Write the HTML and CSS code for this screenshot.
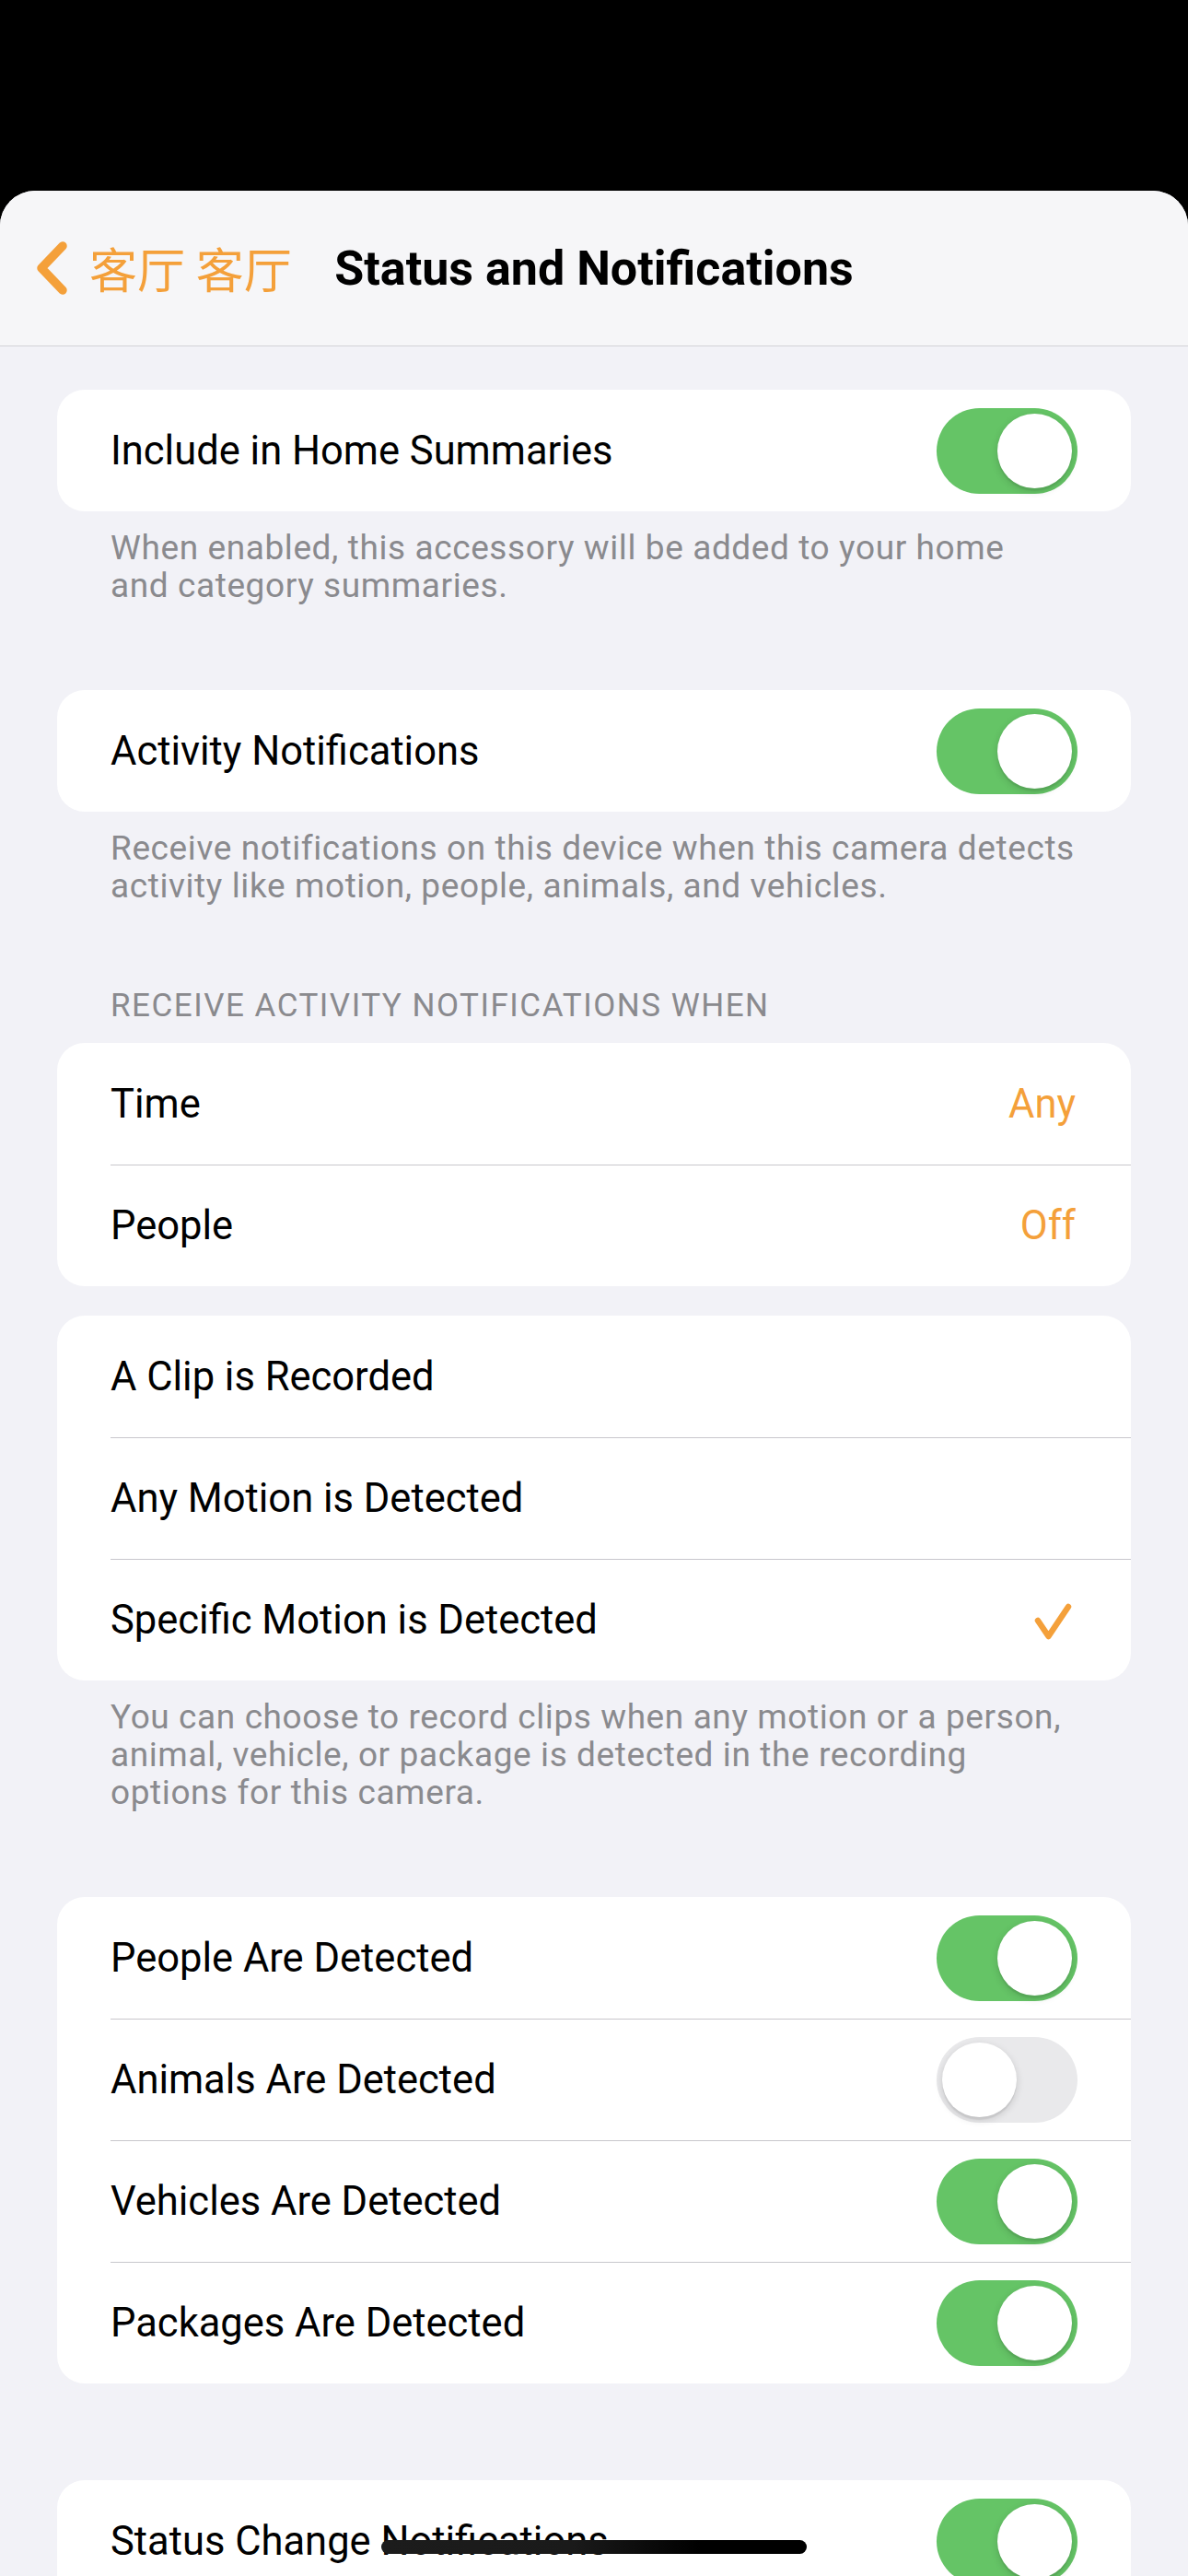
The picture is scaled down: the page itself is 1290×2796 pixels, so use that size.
FILE: index.html
```html
<!DOCTYPE html>
<html lang="en">
<head>
<meta charset="utf-8">
<title>Status and Notifications</title>
<link rel="stylesheet" href="styles.css">
</head>
<body>
<div class="sheet">
  <header class="nav">
    <div class="nav-row">
      <a class="back">
        <svg class="chev" width="34" height="58" viewBox="0 0 34 58"><path d="M29 5 L6 29 L29 53" fill="none" stroke="#f4a03a" stroke-width="9.5" stroke-linecap="round" stroke-linejoin="round"/></svg>
        <span class="back-label">客厅 客厅</span>
      </a>
      <h1 class="title">Status and Notifications</h1>
      <span class="nav-spacer"></span>
    </div>
  </header>

  <main class="content">
    <section class="group g-first">
      <div class="card">
        <div class="row"><div class="row-inner"><span class="label">Include in Home Summaries</span><span class="switch on"><span class="knob"></span></span></div></div>
      </div>
      <p class="footer">When enabled, this accessory will be added to your home<br>and category summaries.</p>
    </section>

    <section class="group g-after-footer">
      <div class="card">
        <div class="row"><div class="row-inner"><span class="label">Activity Notifications</span><span class="switch on"><span class="knob"></span></span></div></div>
      </div>
      <p class="footer">Receive notifications on this device when this camera detects<br>activity like motion, people, animals, and vehicles.</p>
    </section>

    <section class="group g-header">
      <h2 class="section-header">RECEIVE ACTIVITY NOTIFICATIONS WHEN</h2>
      <div class="card">
        <div class="row"><div class="row-inner"><span class="label">Time</span><span class="value">Any</span></div></div>
        <div class="row"><div class="row-inner sep"><span class="label">People</span><span class="value">Off</span></div></div>
      </div>
    </section>

    <section class="group g-after-card">
      <div class="card">
        <div class="row"><div class="row-inner"><span class="label">A Clip is Recorded</span></div></div>
        <div class="row"><div class="row-inner sep"><span class="label">Any Motion is Detected</span></div></div>
        <div class="row"><div class="row-inner sep"><span class="label">Specific Motion is Detected</span>
          <svg class="check" width="46" height="44" viewBox="0 0 46 44"><path d="M5 22 L16.5 39 L38 7" fill="none" stroke="#f4a03a" stroke-width="6.5" stroke-linecap="round" stroke-linejoin="round"/></svg>
        </div></div>
      </div>
      <p class="footer">You can choose to record clips when any motion or a person,<br>animal, vehicle, or package is detected in the recording<br>options for this camera.</p>
    </section>

    <section class="group g-after-footer">
      <div class="card">
        <div class="row"><div class="row-inner"><span class="label">People Are Detected</span><span class="switch on"><span class="knob"></span></span></div></div>
        <div class="row"><div class="row-inner sep"><span class="label">Animals Are Detected</span><span class="switch off"><span class="knob"></span></span></div></div>
        <div class="row"><div class="row-inner sep"><span class="label">Vehicles Are Detected</span><span class="switch on"><span class="knob"></span></span></div></div>
        <div class="row"><div class="row-inner sep"><span class="label">Packages Are Detected</span><span class="switch on"><span class="knob"></span></span></div></div>
      </div>
    </section>

    <section class="group g-section-gap">
      <div class="card">
        <div class="row"><div class="row-inner"><span class="label">Status Change Notifications</span><span class="switch on"><span class="knob"></span></span></div></div>
      </div>
    </section>
  </main>
</div>
<div class="home-indicator"></div>
</body>
</html>
```

FILE: styles.css
```css
html, body {
  margin: 0;
  padding: 0;
  background: #000;
  height: 2796px;
  overflow: hidden;
}

body {
  font-family: Roboto, "Noto Sans CJK SC", sans-serif;
  color: #000;
  position: relative;
}

.sheet {
  margin-top: 207px;
  height: 2589px;
  overflow: hidden;
  background: #f2f2f7;
  border-radius: 38px 38px 0 0;
}

.nav {
  height: 168px;
  background: #f6f6f8;
  border-bottom: 1px solid #d3d3d7;
}

.nav-row {
  display: grid;
  grid-template-columns: 1fr auto 1fr;
  align-items: center;
  height: 88px;
  padding-top: 40px;
}

.back {
  display: flex;
  align-items: center;
  gap: 24px;
  padding-left: 39px;
  color: #f4a03a;
}

.chev {
  display: block;
  flex: none;
}

.back-label {
  font-family: "Noto Sans CJK SC", sans-serif;
  font-size: 52px;
  line-height: 1;
  white-space: nowrap;
}

.title {
  margin: 0;
  font-size: 52px;
  font-weight: 700;
  white-space: nowrap;
}

.content {
  display: flex;
  flex-direction: column;
}

.group {
  margin: 0 62px;
}

.g-first { margin-top: 47px; }
.g-after-footer { margin-top: 93px; }
.g-header { margin-top: 90px; }
.g-after-card { margin-top: 32px; }
.g-section-gap { margin-top: 105px; }

.card {
  background: #fff;
  border-radius: 30px;
  overflow: hidden;
}

.row {
  padding-left: 58px;
}

.row-inner {
  box-sizing: border-box;
  height: 132px;
  display: flex;
  align-items: center;
  justify-content: space-between;
  padding-right: 58px;
}

.row-inner.sep {
  border-top: 1px solid #c8c7cc;
}

.label {
  font-size: 43.5px;
  white-space: nowrap;
}

.value {
  font-size: 43.5px;
  color: #f4a03a;
  padding-right: 2px;
}

.check {
  display: block;
  margin-right: 2px;
}

.footer {
  margin: 0;
  padding: 19px 30px 0 58px;
  font-size: 37px;
  line-height: 41px;
  letter-spacing: 0.6px;
  color: #8a8a8e;
  white-space: nowrap;
}

.section-header {
  margin: 0 0 20px;
  padding: 0 58px;
  font-size: 35px;
  font-weight: 400;
  line-height: 40px;
  letter-spacing: 1.5px;
  color: #8a8a8e;
  white-space: nowrap;
}

.switch {
  box-sizing: border-box;
  width: 153px;
  height: 93px;
  border-radius: 47px;
  padding: 6px;
  display: flex;
  flex: none;
}

.switch.on {
  background: #65c466;
  justify-content: flex-end;
}

.switch.off {
  background: #e9e9eb;
  justify-content: flex-start;
}

.knob {
  width: 81px;
  height: 81px;
  border-radius: 50%;
  background: #fff;
  box-shadow: 0 3px 8px rgba(0, 0, 0, 0.15), 0 3px 1px rgba(0, 0, 0, 0.06);
}

.home-indicator {
  position: absolute;
  left: 414px;
  top: 2757px;
  width: 462px;
  height: 15px;
  border-radius: 8px;
  background: linear-gradient(90deg, #1c1c1c 0%, #1a1a1a 45%, #000 75%, #000 100%);
}
```
